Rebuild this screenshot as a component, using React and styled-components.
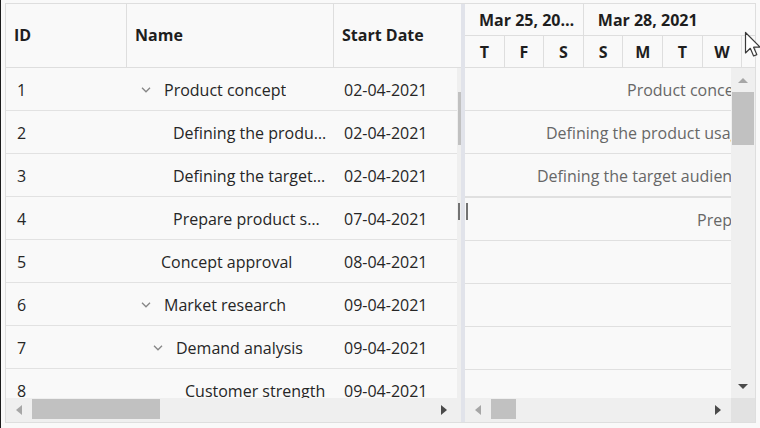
import styled, { createGlobalStyle } from "styled-components"

const DAY = 39.6

const GlobalStyle = createGlobalStyle`
  html, body {
    margin: 0;
    background: #f9f9f9;
  }
  body {
    font-family: "Open Sans", "Noto Sans", sans-serif;
    color: #262626;
  }
  * {
    box-sizing: border-box;
  }
`

const Page = styled.div`
  position: relative;
  height: 428px;
  padding: 3px 4px 5px 4px;
  border-left: 1px solid #1c1c1c;
  overflow: hidden;
`

const Gantt = styled.div`
  display: flex;
  height: 420px;
  border: 1px solid #dedede;
  background: #f9f9f9;
  font-size: 16px;
`

/* ---------- tree grid ---------- */

const GridPane = styled.div`
  width: 455px;
  flex-shrink: 0;
  display: flex;
  flex-direction: column;
`

const columns = "120px 207px 1fr"

const GridHeader = styled.div`
  display: grid;
  grid-template-columns: ${columns};
  height: 64px;
  border-bottom: 1px solid #dedede;
`

const HeaderCell = styled.div`
  display: flex;
  align-items: center;
  padding: 0 8px 1px;
  font-weight: 700;
  color: #1e1e1e;
  border-left: ${(p) => (p.$divider ? "1px solid #dedede" : "none")};
`

const GridBody = styled.div`
  flex: 1;
  min-height: 0;
  display: flex;
`

const GridMain = styled.div`
  flex: 1;
  min-width: 0;
  display: flex;
  flex-direction: column;
`

const GridRows = styled.div`
  flex: 1;
  overflow: hidden;
`

const Row = styled.div`
  display: grid;
  grid-template-columns: ${columns};
  height: 43px;
  border-bottom: 1px solid #e2e2e2;
`

const Cell = styled.div`
  display: flex;
  align-items: center;
  padding: 1px 11px 0;
  white-space: nowrap;
  overflow: hidden;
`

const NameCell = styled(Cell)`
  padding-left: ${(p) => 14 + p.$level * 12}px;
  padding-right: 6px;
`

const Toggle = styled.span`
  flex-shrink: 0;
  width: ${(p) => (p.$parent ? 24 : 21)}px;
  display: flex;
  align-items: center;
  padding-left: 1px;
`

const NameText = styled.span`
  overflow: hidden;
  text-overflow: ellipsis;
`

const ThinScroll = styled.div`
  width: 4px;
  flex-shrink: 0;
  background: #efefef;
  padding-top: 24px;
`

const ThinThumb = styled.div`
  margin-left: 1px;
  width: 3px;
  height: 53px;
  background: #c1c1c1;
`

/* ---------- splitter ---------- */

const Splitter = styled.div`
  position: relative;
  width: 4px;
  flex-shrink: 0;
  background: #e1e3ea;
`

const Grip = styled.div`
  position: absolute;
  top: 199px;
  left: -3px;
  display: flex;
  gap: 6px;

  span {
    width: 2px;
    height: 17px;
    background: #737373;
  }
`

/* ---------- chart ---------- */

const ChartPane = styled.div`
  flex: 1;
  min-width: 0;
  display: flex;
  flex-direction: column;
`

const ChartHeader = styled.div`
  height: 64px;
  overflow: hidden;
  border-bottom: 1px solid #dedede;
`

const Tier = styled.div`
  display: flex;
  height: ${(p) => (p.$top ? 32 : 31)}px;
  border-bottom: ${(p) => (p.$top ? "1px solid #dedede" : "none")};
  font-weight: 700;
  color: #1e1e1e;
`

const WeekCell = styled.div`
  flex-shrink: 0;
  width: ${(p) => p.$days * DAY}px;
  display: flex;
  align-items: center;
  padding: 0 7px 0 14px;
  border-right: 1px solid #dedede;
  white-space: nowrap;
  overflow: hidden;

  span {
    overflow: hidden;
    text-overflow: ellipsis;
  }
`

const DayCell = styled.div`
  flex-shrink: 0;
  width: ${DAY}px;
  display: flex;
  align-items: center;
  justify-content: center;
  border-right: 1px solid #dedede;
`

const ChartBody = styled.div`
  flex: 1;
  min-height: 0;
  display: flex;
`

const ChartRows = styled.div`
  flex: 1;
  min-width: 0;
  overflow: hidden;
`

const ChartRow = styled.div`
  height: ${(p) => (p.$thick ? 44 : 43)}px;
  display: flex;
  align-items: center;
  white-space: nowrap;
  padding-top: 1px;
  border-bottom: ${(p) => (p.$thick ? 2 : 1)}px solid #e0e0e0;
`

const TaskLabel = styled.span`
  flex-shrink: 0;
  margin-left: ${(p) => p.$offset}px;
  color: #676767;
`

/* ---------- scrollbars ---------- */

const BottomBar = styled.div`
  display: flex;
`

const HScroll = styled.div`
  flex: 1;
  display: flex;
  height: 24px;
  background: #efefef;
`

const VScroll = styled.div`
  width: 24px;
  flex-shrink: 0;
  display: flex;
  flex-direction: column;
  background: #efefef;
`

const Track = styled.div`
  flex: 1;
  display: flex;
  flex-direction: ${(p) => (p.$vertical ? "column" : "row")};
`

const Thumb = styled.div`
  background: #c1c1c1;
  ${(p) =>
    p.$vertical
      ? `height: ${p.$size}px; margin: 0 1px 0 1px;`
      : `width: ${p.$size}px; margin: 1px 0 3px 0;`}
`

const ArrowButton = styled.div`
  flex-shrink: 0;
  ${(p) => (p.$vertical ? "height: 24px;" : "width: 26px;")}
  display: flex;
  align-items: center;
  justify-content: center;
`

const arrowShapes = (color) => ({
  left: `border-top: 5px solid transparent; border-bottom: 5px solid transparent; border-right: 6px solid ${color};`,
  right: `border-top: 5px solid transparent; border-bottom: 5px solid transparent; border-left: 6px solid ${color};`,
  up: `border-left: 5.5px solid transparent; border-right: 5.5px solid transparent; border-bottom: 5px solid ${color};`,
  down: `border-left: 5.5px solid transparent; border-right: 5.5px solid transparent; border-top: 5px solid ${color};`,
})

const Arrow = styled.span`
  width: 0;
  height: 0;
  ${(p) => arrowShapes(p.$disabled ? "#a6a6a6" : "#4a4a4a")[p.$dir]}
`

const Corner = styled.div`
  width: 24px;
  flex-shrink: 0;
  background: #e2e2e2;
`

const Pointer = styled.svg`
  position: absolute;
  left: 743px;
  top: 31px;
`

/* ---------- data ---------- */

const tasks = [
  { id: 1, name: "Product concept", level: 0, parent: true, start: "02-04-2021" },
  { id: 2, name: "Defining the product usage", level: 1, start: "02-04-2021" },
  { id: 3, name: "Defining the target audience", level: 1, start: "02-04-2021" },
  { id: 4, name: "Prepare product sketch and notes", level: 1, start: "07-04-2021" },
  { id: 5, name: "Concept approval", level: 0, start: "08-04-2021" },
  { id: 6, name: "Market research", level: 0, parent: true, start: "09-04-2021" },
  { id: 7, name: "Demand analysis", level: 1, parent: true, start: "09-04-2021" },
  { id: 8, name: "Customer strength", level: 2, start: "09-04-2021" },
]

const chartLabels = [
  { text: "Product concept", offset: 162 },
  { text: "Defining the product usage", offset: 81 },
  { text: "Defining the target audience", offset: 72, thick: true },
  { text: "Prepare product sketch and notes", offset: 232 },
  {},
  {},
  {},
  {},
]

const weeks = [
  { label: "Mar 25, 2021", days: 3 },
  { label: "Mar 28, 2021", days: 7 },
]

const days = ["T", "F", "S", "S", "M", "T", "W", "T", "F", "S"]

function Chevron() {
  return (
    <svg width="10" height="6" viewBox="0 0 10 6">
      <polyline points="1,0.8 5,4.8 9,0.8" fill="none" stroke="#868686" strokeWidth="1.3" />
    </svg>
  )
}

function HorizontalBar({ thumb }) {
  return (
    <HScroll>
      <ArrowButton>
        <Arrow $dir="left" $disabled />
      </ArrowButton>
      <Track>
        <Thumb $size={thumb} />
      </Track>
      <ArrowButton>
        <Arrow $dir="right" />
      </ArrowButton>
    </HScroll>
  )
}

function TreeGrid() {
  return (
    <GridPane>
      <GridHeader>
        <HeaderCell>ID</HeaderCell>
        <HeaderCell $divider>Name</HeaderCell>
        <HeaderCell $divider>Start Date</HeaderCell>
      </GridHeader>
      <GridBody>
        <GridMain>
          <GridRows>
            {tasks.map((t) => (
              <Row key={t.id}>
                <Cell>{t.id}</Cell>
                <NameCell $level={t.level}>
                  <Toggle $parent={t.parent}>{t.parent && <Chevron />}</Toggle>
                  <NameText>{t.name}</NameText>
                </NameCell>
                <Cell>{t.start}</Cell>
              </Row>
            ))}
          </GridRows>
          <BottomBar>
            <HorizontalBar thumb={128} />
          </BottomBar>
        </GridMain>
        <ThinScroll>
          <ThinThumb />
        </ThinScroll>
      </GridBody>
    </GridPane>
  )
}

function Timeline() {
  return (
    <ChartPane>
      <ChartHeader>
        <Tier $top>
          {weeks.map((w) => (
            <WeekCell key={w.label} $days={w.days}>
              <span>{w.label}</span>
            </WeekCell>
          ))}
        </Tier>
        <Tier>
          {days.map((d, i) => (
            <DayCell key={i}>{d}</DayCell>
          ))}
        </Tier>
      </ChartHeader>
      <ChartBody>
        <ChartRows>
          {chartLabels.map((l, i) => (
            <ChartRow key={i} $thick={l.thick}>
              {l.text && <TaskLabel $offset={l.offset}>{l.text}</TaskLabel>}
            </ChartRow>
          ))}
        </ChartRows>
        <VScroll>
          <ArrowButton $vertical>
            <Arrow $dir="up" $disabled />
          </ArrowButton>
          <Track $vertical>
            <Thumb $vertical $size={53} />
          </Track>
          <ArrowButton $vertical>
            <Arrow $dir="down" />
          </ArrowButton>
        </VScroll>
      </ChartBody>
      <BottomBar>
        <HorizontalBar thumb={25} />
        <Corner />
      </BottomBar>
    </ChartPane>
  )
}

export default function App() {
  return (
    <Page>
      <GlobalStyle />
      <Gantt>
        <TreeGrid />
        <Splitter>
          <Grip>
            <span />
            <span />
          </Grip>
        </Splitter>
        <Timeline />
      </Gantt>
      <Pointer width="18" height="28" viewBox="0 0 18 28">
        <path
          d="M1.5 1.5 L1.5 22 L6.3 17.3 L9.6 25 L12.8 23.6 L9.6 16.2 L16 16.2 Z"
          fill="#fff"
          stroke="#3a3a3a"
          strokeWidth="1.2"
          strokeLinejoin="round"
        />
      </Pointer>
    </Page>
  )
}
